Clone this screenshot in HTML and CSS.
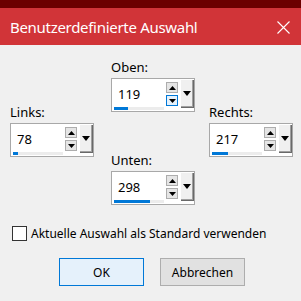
FILE: index.html
```html
<!DOCTYPE html>
<html>
<head>
  <meta charset="utf-8">
  <title>Benutzerdefinierte Auswahl</title>
  <link rel="stylesheet" href="styles.css">
</head>
<body>
  <div class="topstrip"></div>
  <div class="titlebar">
    <span class="title">Benutzerdefinierte Auswahl</span>
    <svg class="close" width="13" height="13" viewBox="0 0 13 13">
      <path d="M0.5 0.5 L12.5 12.5 M12.5 0.5 L0.5 12.5" stroke="#fff" stroke-width="1.1" fill="none"/>
    </svg>
  </div>

  <div class="content">
    <div class="fields">
      <!-- left column -->
      <div class="col col-side">
        <div class="field">
          <div class="label">Links:</div>
          <div class="spin">
            <div class="spin-main">
              <div class="spin-value">78</div>
              <div class="track"><div class="bar" style="width:5px"></div></div>
            </div>
            <div class="arrows">
              <div class="arrow"><svg width="7" height="4"><polygon points="0,4 7,4 3.5,0" fill="#000"/></svg></div>
              <div class="arrow"><svg width="7" height="4"><polygon points="0,0 7,0 3.5,4" fill="#000"/></svg></div>
            </div>
            <div class="drop"><svg width="8" height="5"><polygon points="0,0 8,0 4,5" fill="#000"/></svg></div>
          </div>
        </div>
      </div>

      <!-- middle column -->
      <div class="col col-mid">
        <div class="field">
          <div class="label">Oben:</div>
          <div class="spin">
            <div class="spin-main">
              <div class="spin-value">119</div>
              <div class="track"><div class="bar" style="width:14px"></div></div>
            </div>
            <div class="arrows">
              <div class="arrow"><svg width="7" height="4"><polygon points="0,4 7,4 3.5,0" fill="#000"/></svg></div>
              <div class="arrow hot"><svg width="7" height="4"><polygon points="0,0 7,0 3.5,4" fill="#000"/></svg></div>
            </div>
            <div class="drop"><svg width="8" height="5"><polygon points="0,0 8,0 4,5" fill="#000"/></svg></div>
          </div>
        </div>
        <div class="field field-low">
          <div class="label">Unten:</div>
          <div class="spin">
            <div class="spin-main">
              <div class="spin-value">298</div>
              <div class="track"><div class="bar" style="width:36px"></div></div>
            </div>
            <div class="arrows">
              <div class="arrow"><svg width="7" height="4"><polygon points="0,4 7,4 3.5,0" fill="#000"/></svg></div>
              <div class="arrow"><svg width="7" height="4"><polygon points="0,0 7,0 3.5,4" fill="#000"/></svg></div>
            </div>
            <div class="drop"><svg width="8" height="5"><polygon points="0,0 8,0 4,5" fill="#000"/></svg></div>
          </div>
        </div>
      </div>

      <!-- right column -->
      <div class="col col-side col-right">
        <div class="field">
          <div class="label">Rechts:</div>
          <div class="spin">
            <div class="spin-main">
              <div class="spin-value">217</div>
              <div class="track"><div class="bar" style="width:16px"></div></div>
            </div>
            <div class="arrows">
              <div class="arrow"><svg width="7" height="4"><polygon points="0,4 7,4 3.5,0" fill="#000"/></svg></div>
              <div class="arrow"><svg width="7" height="4"><polygon points="0,0 7,0 3.5,4" fill="#000"/></svg></div>
            </div>
            <div class="drop"><svg width="8" height="5"><polygon points="0,0 8,0 4,5" fill="#000"/></svg></div>
          </div>
        </div>
      </div>
    </div>

    <label class="check">
      <span class="box"></span>
      <span>Aktuelle Auswahl als Standard verwenden</span>
    </label>

    <div class="buttons">
      <button class="btn btn-default">OK</button>
      <button class="btn">Abbrechen</button>
    </div>
  </div>
</body>
</html>
```

FILE: styles.css
```css
body {
  margin: 0;
  width: 301px;
  height: 301px;
  overflow: hidden;
  background: #f0f0f0;
  font-family: "Noto Sans", "DejaVu Sans", sans-serif;
  color: #000;
}

.topstrip {
  height: 8px;
  background: #6c0000;
}

.titlebar {
  height: 37px;
  box-sizing: border-box;
  padding: 1px 11px 0 10px;
  background: #d13438;
  color: #fff;
  display: flex;
  align-items: center;
  justify-content: space-between;
  font-size: 15px;
  letter-spacing: -0.3px;
}

.close {
  display: block;
}

.content {
  padding-top: 14px;
}

/* spin fields */
.fields {
  display: flex;
  padding-left: 10px;
}
.col {
  width: 84px;
}
.col-side {
  margin-top: 45px;
}
.col-mid {
  margin-left: 17px;
}
.col-right {
  margin-left: 14px;
}

.field-low {
  margin-top: 40px;
}

.label {
  font-size: 13px;
  line-height: 17px;
  height: 17px;
  margin-bottom: 2px;
}

.spin {
  display: flex;
  height: 34px;
  box-sizing: border-box;
  border: 1px solid #a8a8a8;
  background: #fff;
}

.spin-main {
  flex: 1;
  display: flex;
  flex-direction: column;
  padding: 1px 0 1px 2px;
}
.spin-value {
  flex: 1;
  display: flex;
  align-items: center;
  padding-left: 4px;
  font-size: 13px;
}
.track {
  height: 3px;
  background: #ececec;
}
.bar {
  height: 3px;
  background: #0078d7;
}

.arrows {
  display: flex;
  flex-direction: column;
  gap: 2px;
  padding: 3px 2px 0 2px;
}
.arrow {
  width: 12px;
  height: 11px;
  box-sizing: border-box;
  border: 1px solid #adadad;
  background: #e5e5e5;
  display: flex;
  align-items: center;
  justify-content: center;
}
.arrow svg {
  display: block;
}
.arrow.hot {
  border-color: #0078d7;
  background: #e5f1fb;
}

.drop {
  width: 14px;
  height: 29px;
  box-sizing: border-box;
  background: #f0f0f0;
  border-left: 1px solid #fff;
  border-top: 1px solid #fff;
  box-shadow: inset -1px -1px 0 #696969, inset -2px -2px 0 #a0a0a0;
  display: flex;
  justify-content: center;
  padding-top: 11px;
  padding-right: 2px;
}
.drop svg {
  display: block;
}

/* checkbox */
.check {
  display: flex;
  align-items: center;
  gap: 4px;
  margin: 20px 0 0 12px;
  font-size: 12px;
  height: 16px;
}
.box {
  width: 15px;
  height: 15px;
  box-sizing: border-box;
  border: 1px solid #333;
  background: #fff;
}

/* buttons */
.buttons {
  display: flex;
  gap: 16px;
  margin: 17px 0 0 59px;
}
.btn {
  width: 85px;
  height: 28px;
  box-sizing: border-box;
  border: 1px solid #adadad;
  background: #e1e1e1;
  font-family: "Noto Sans", "DejaVu Sans", sans-serif;
  font-size: 12px;
  color: #000;
  padding: 0;
}
.btn-default {
  border-color: #0078d7;
  background: #e5f1fb;
}
```
